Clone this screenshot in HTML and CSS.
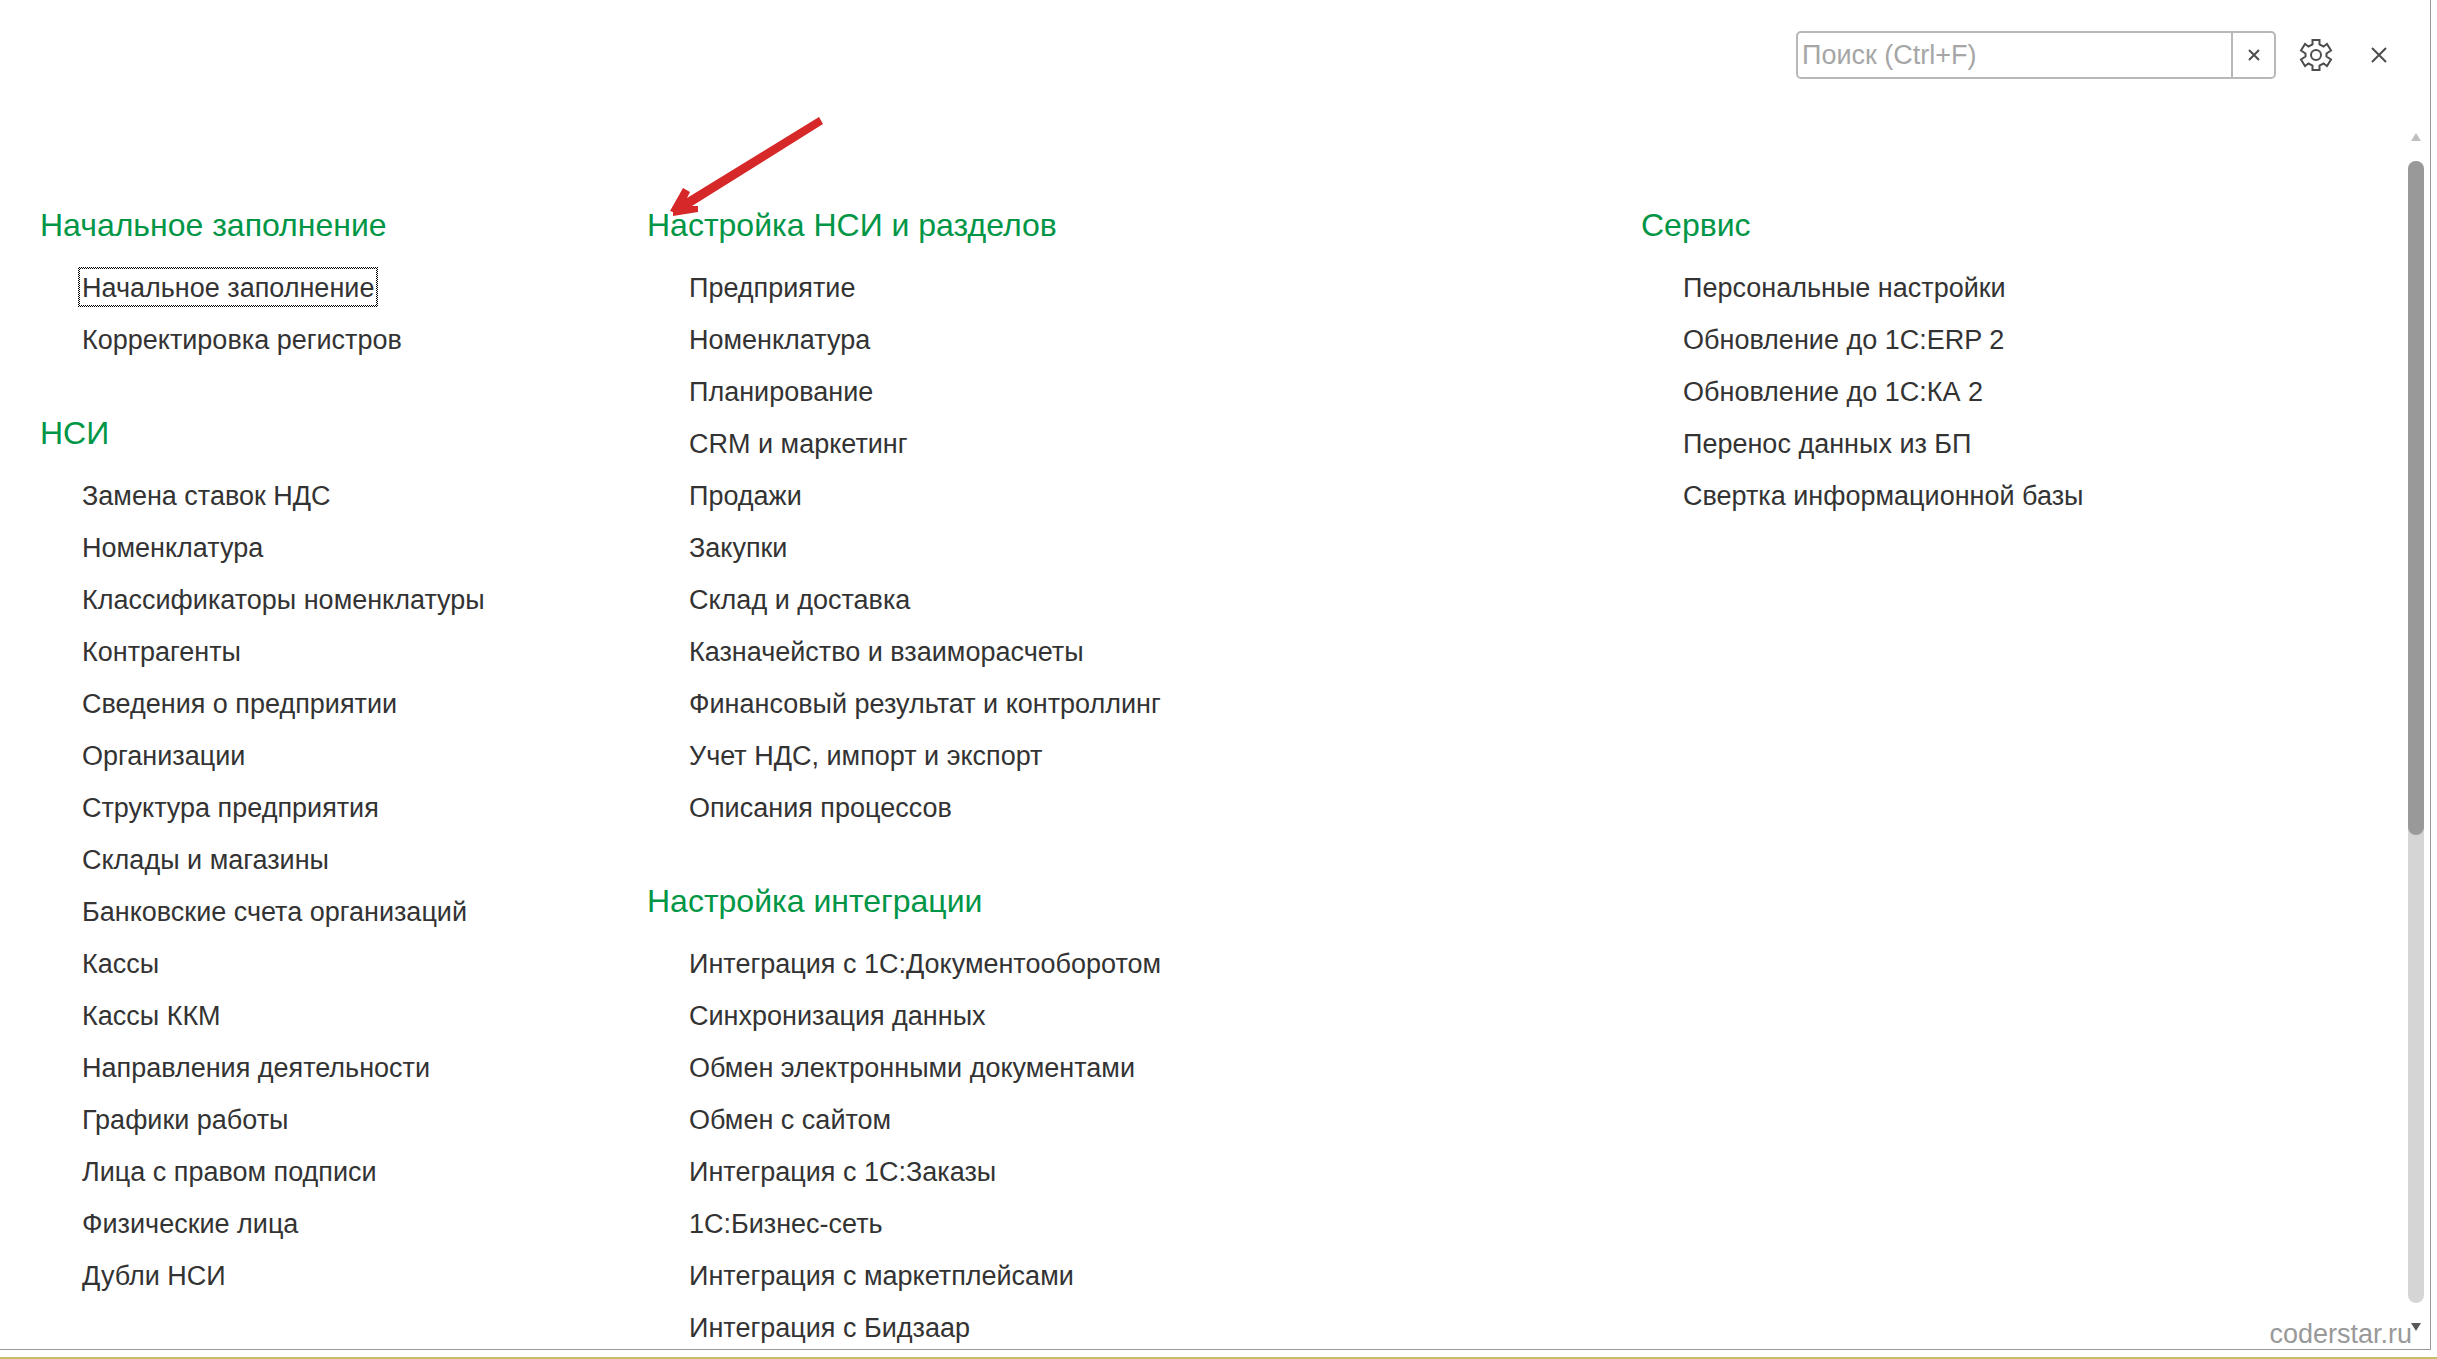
FILE: index.html
```
<!DOCTYPE html>
<html lang="ru">

    <head>

        <meta charset="utf-8">
        <title>НСИ и администрирование</title>

        <link rel="stylesheet" href="styles.css">

    </head>

    <body>

        <div class="panel">

            <div class="top">

                <div class="search">
                    <input type="text" class="search-text" id="search" placeholder="Поиск (Ctrl+F)" aria-label="Поиск">
                    <button class="search-clear" aria-label="Очистить">
                        <svg width="12" height="12" viewBox="0 0 12 12"><path d="M1 1L11 11M11 1L1 11"/></svg>
                    </button>
                </div>

                <button class="icon" aria-label="Настройка">
                    <svg width="34" height="34" viewBox="0 0 34 34">
                        <path d="M13.5 2H20.5V6.5L24.5 8.5L28 6L32 12.5L27.5 15.5V18.5L32 21.5L28 28L24.5 25.5L20.5 27.5V32H13.5V27.5L9.5 25.5L6 28L2 21.5L6.5 18.5V15.5L2 12.5L6 6L9.5 8.5L13.5 6.5Z"/>
                        <circle cx="17" cy="17" r="5"/>
                    </svg>
                </button>

                <button class="icon" aria-label="Закрыть">
                    <svg width="16" height="16" viewBox="0 0 16 16"><path d="M1 1L15 15M15 1L1 15"/></svg>
                </button>

            </div>

            <div class="main">

                <div class="columns">

                    <div class="column">

                        <h2>Начальное заполнение</h2>
                        <ul>
                            <li><a href="#" class="focused">Начальное заполнение</a></li>
                            <li><a href="#">Корректировка регистров</a></li>
                        </ul>

                        <h2>НСИ</h2>
                        <ul>
                            <li><a href="#">Замена ставок НДС</a></li>
                            <li><a href="#">Номенклатура</a></li>
                            <li><a href="#">Классификаторы номенклатуры</a></li>
                            <li><a href="#">Контрагенты</a></li>
                            <li><a href="#">Сведения о предприятии</a></li>
                            <li><a href="#">Организации</a></li>
                            <li><a href="#">Структура предприятия</a></li>
                            <li><a href="#">Склады и магазины</a></li>
                            <li><a href="#">Банковские счета организаций</a></li>
                            <li><a href="#">Кассы</a></li>
                            <li><a href="#">Кассы ККМ</a></li>
                            <li><a href="#">Направления деятельности</a></li>
                            <li><a href="#">Графики работы</a></li>
                            <li><a href="#">Лица с правом подписи</a></li>
                            <li><a href="#">Физические лица</a></li>
                            <li><a href="#">Дубли НСИ</a></li>
                        </ul>

                    </div>

                    <div class="column">

                        <svg class="arrow" width="156" height="100" viewBox="0 0 156 100">
                            <path d="M149 0L153 7L22 89H28V95L3 99V95L0 94L13 71L20 75L17 81Z"/>
                        </svg>

                        <h2>Настройка НСИ и разделов</h2>
                        <ul>
                            <li><a href="#">Предприятие</a></li>
                            <li><a href="#">Номенклатура</a></li>
                            <li><a href="#">Планирование</a></li>
                            <li><a href="#">CRM и маркетинг</a></li>
                            <li><a href="#">Продажи</a></li>
                            <li><a href="#">Закупки</a></li>
                            <li><a href="#">Склад и доставка</a></li>
                            <li><a href="#">Казначейство и взаиморасчеты</a></li>
                            <li><a href="#">Финансовый результат и контроллинг</a></li>
                            <li><a href="#">Учет НДС, импорт и экспорт</a></li>
                            <li><a href="#">Описания процессов</a></li>
                        </ul>

                        <h2>Настройка интеграции</h2>
                        <ul>
                            <li><a href="#">Интеграция с 1С:Документооборотом</a></li>
                            <li><a href="#">Синхронизация данных</a></li>
                            <li><a href="#">Обмен электронными документами</a></li>
                            <li><a href="#">Обмен с сайтом</a></li>
                            <li><a href="#">Интеграция с 1С:Заказы</a></li>
                            <li><a href="#">1С:Бизнес-сеть</a></li>
                            <li><a href="#">Интеграция с маркетплейсами</a></li>
                            <li><a href="#">Интеграция с Бидзаар</a></li>
                        </ul>

                    </div>

                    <div class="column">

                        <h2>Сервис</h2>
                        <ul>
                            <li><a href="#">Персональные настройки</a></li>
                            <li><a href="#">Обновление до 1С:ERP 2</a></li>
                            <li><a href="#">Обновление до 1С:КА 2</a></li>
                            <li><a href="#">Перенос данных из БП</a></li>
                            <li><a href="#">Свертка информационной базы</a></li>
                        </ul>

                    </div>

                </div>

                <div class="scroll">
                    <svg class="scroll-up" width="10" height="8" viewBox="0 0 10 8"><path d="M5 0L10 8H0Z"/></svg>
                    <div class="track"><div class="thumb"></div></div>
                    <svg class="scroll-down" width="10" height="8" viewBox="0 0 10 8"><path d="M0 0H10L5 8Z"/></svg>
                </div>

            </div>

            <div class="watermark">coderstar.ru</div>

        </div>

    </body>

</html>
```
FILE: styles.css
```
* {

    box-sizing: border-box;

}

body {

    margin: 0;
    height: 100vh;
    padding: 0 6px 7px 0;
    border-bottom: 2px solid #c4bd6b;
    background-color: #fff;
    color: #333;
    font-size: 27px;
    font-family: "Liberation Sans", Arial, Helvetica, sans-serif;

}

.panel {

    position: relative;
    display: flex;
    flex-direction: column;
    height: 100%;
    overflow: hidden;
    border-right: 1px solid #999;
    border-bottom: 1px solid #999;

}

.top {

    display: flex;
    justify-content: flex-end;
    align-items: center;
    gap: 16px;
    padding: 31px 28px 0 0;

}

.search {

    display: flex;
    width: 480px;
    height: 48px;
    border: 2px solid #b8b8b8;
    border-radius: 5px;

}

.search-text {

    flex: 1;
    min-width: 0;
    padding: 0 4px;
    border: 0;
    outline: 0;
    background: none;
    color: #333;
    font: inherit;

}

.search-text::placeholder {

    color: #a6a6a6;

}

button {

    display: flex;
    align-items: center;
    justify-content: center;
    padding: 0;
    border: 0;
    background: none;

}

button svg {

    fill: none;
    stroke: #4d4d4d;
    stroke-width: 2;

}

.search-clear {

    width: 43px;
    border-left: 2px solid #b8b8b8;

}

.icon {

    width: 47px;
    height: 48px;

}

.main {

    flex: 1;
    display: flex;
    min-height: 0;
    padding: 54px 6px 18px 40px;

}

.columns {

    flex: 1;
    display: grid;
    grid-template-columns: 607fr 994fr 767fr;
    padding-top: 72px;

}

.column {

    position: relative;

}

h2 {

    margin: 0 0 16px;
    color: #009646;
    font-size: 32px;
    font-weight: normal;
    line-height: 40px;

}

ul {

    margin: 0 0 48px;
    padding: 0 0 0 38px;
    list-style: none;

}

li {

    display: flex;
    align-items: center;
    height: 52px;

}

a {

    padding: 2px 2px 0;
    border: 2px solid transparent;
    color: #333;
    line-height: 34px;
    text-decoration: none;
    white-space: nowrap;

}

/* dithered focus frame */
.focused {

    background: linear-gradient(#fff, #fff) padding-box, repeating-conic-gradient(#000 0 25%, #fff 0 50%) 0 0 / 2px 2px border-box;

}

.arrow {

    position: absolute;
    left: 23px;
    top: -88px;
    fill: #d62828;

}

.scroll {

    display: flex;
    flex-direction: column;
    align-items: center;
    gap: 20px;
    width: 16px;

}

.scroll-up {

    flex: none;
    fill: #bfbfbf;

}

.scroll-down {

    flex: none;
    fill: #595959;

}

.track {

    flex: 1;
    width: 16px;
    border-radius: 8px;
    background-color: #d5d5d5;

}

.thumb {

    height: 59%;
    border-radius: 8px;
    background-color: #999;

}

.watermark {

    position: absolute;
    right: 18px;
    bottom: 0;
    color: #999;
    line-height: 30px;

}
```
